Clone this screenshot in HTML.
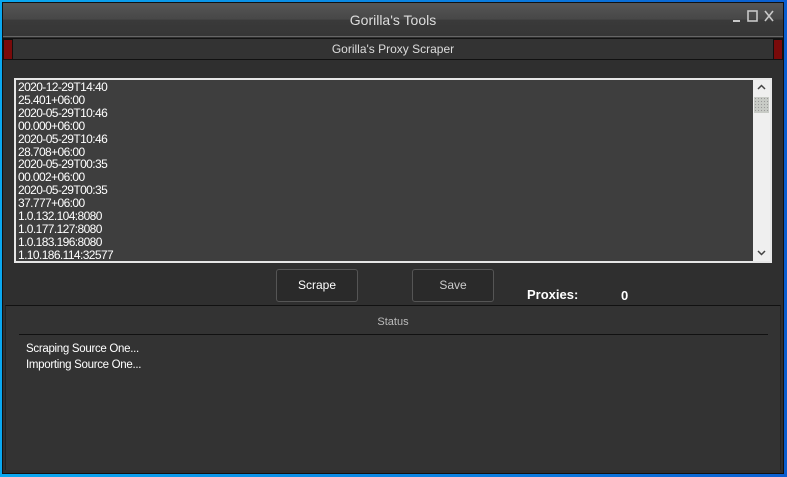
<!DOCTYPE html>
<html><head><meta charset="utf-8"><style>
*{margin:0;padding:0;box-sizing:border-box}
body{width:787px;height:477px;overflow:hidden;background:linear-gradient(90deg,#0aa8f0,#0a7ee0 60%,#0a5ed0);font-family:"Liberation Sans",sans-serif;position:relative}
.win{position:absolute;left:2px;top:2px;width:782px;height:472px;background:#2f2f2f;border:1px solid #111}
.title{position:absolute;left:0;top:0;width:780px;height:34px;background:linear-gradient(#555 0%,#474747 50%,#3a3a3a 51%,#363636 100%);color:#ddd;font-size:14px;text-align:center;line-height:34px;border-bottom:1px solid #666}
.hdr{position:absolute;left:0;top:35px;width:780px;height:22px;background:#333;border-top:1px solid #111;border-bottom:1px solid #111;color:#ddd;font-size:12px;text-align:center;line-height:21px}
.red{position:absolute;top:0;width:10px;height:21px;background:#7a0a0a;border:1px solid #111}
.list{position:absolute;left:11px;top:75px;width:758px;height:185px;background:#3e3e3e;border:2px solid #e6e6e6;color:#fff;font-size:12px;line-height:12.9px;padding:1px 0 0 2px;overflow:hidden;letter-spacing:-0.6px}
.sb{position:absolute;right:0;top:0;width:17px;height:100%;background:#efefef}
.thumb{position:absolute;left:1px;top:17px;width:15px;height:16px;background:#c8cbc6;background-image:radial-gradient(#999 0.6px,transparent 0.8px);background-size:3px 3px}
.btn{position:absolute;top:266px;width:82px;height:33px;background:#2a2a2a;border:1px solid #555;border-radius:3px;color:#fff;font-size:12px;text-align:center;line-height:31px}
.status{position:absolute;left:2px;top:302px;width:776px;height:165px;background:#333;border-top:1px solid #111;border-left:1px solid #222;border-right:1px solid #222}
</style></head><body>
<div class="win">
<div class="title">Gorilla's Tools
<svg style="position:absolute;left:730px;top:6px" width="45" height="14" viewBox="0 0 45 14" fill="none" stroke="#c8c8c8" stroke-width="1.6">
<line x1="0" y1="12" x2="7" y2="12" stroke-width="2"/>
<rect x="15" y="2" width="9" height="10"/>
<path d="M32 2 L40 12 M40 2 L32 12"/>
</svg></div>
<div class="hdr"><div class="red" style="left:0"></div>Gorilla's Proxy Scraper<div class="red" style="right:0"></div></div>
<div class="list">2020-12-29T14:40<br>25.401+06:00<br>2020-05-29T10:46<br>00.000+06:00<br>2020-05-29T10:46<br>28.708+06:00<br>2020-05-29T00:35<br>00.002+06:00<br>2020-05-29T00:35<br>37.777+06:00<br>1.0.132.104:8080<br>1.0.177.127:8080<br>1.0.183.196:8080<br>1.10.186.114:32577
<div class="sb">
<svg style="position:absolute;left:4px;top:4px" width="9" height="6" viewBox="0 0 9 6"><path d="M1 5 L4.5 1.5 L8 5" fill="none" stroke="#444" stroke-width="1.5"/></svg>
<div class="thumb"></div>
<svg style="position:absolute;left:4px;bottom:5px" width="9" height="6" viewBox="0 0 9 6"><path d="M1 1 L4.5 4.5 L8 1" fill="none" stroke="#444" stroke-width="1.5"/></svg>
</div></div>
<div class="btn" style="left:273px">Scrape</div>
<div class="btn" style="left:409px;color:#ccc">Save</div>
<div style="position:absolute;left:524px;top:284px;color:#fff;font-weight:bold;font-size:13px">Proxies:</div>
<div style="position:absolute;left:618px;top:285px;color:#fff;font-weight:bold;font-size:13px">0</div>
<div class="status">
<div style="text-align:center;color:#bbb;font-size:11px;margin-top:10px">Status</div>
<div style="position:absolute;left:13px;top:28px;width:749px;height:1px;background:#111"></div>
<div style="position:absolute;left:20px;top:35px;color:#fff;font-size:11.5px;line-height:16px;letter-spacing:-0.3px">Scraping Source One...<br>Importing Source One...</div>
</div>
</div>
</body></html>
